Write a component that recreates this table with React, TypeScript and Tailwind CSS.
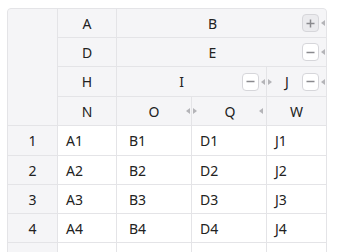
import React from "react";

const LeftTri = () => (
  <span className="w-0 h-0 border-y-[3.5px] border-y-transparent border-r-[4px] border-r-[#b4b4b8]" />
);
const RightTri = () => (
  <span className="w-0 h-0 border-y-[3.5px] border-y-transparent border-l-[4px] border-l-[#b4b4b8]" />
);

const Btn = ({ plus }: { plus?: boolean }) => (
  <span
    className={
      "w-[17px] h-[18px] rounded-[4px] border flex items-center justify-center shrink-0 " +
      (plus ? "bg-[#ebebee] border-[#d6d6da]" : "bg-white border-[#d6d6da]")
    }
  >
    <svg width="9" height="9" viewBox="0 0 9 9">
      <path d="M0.5 4.5H8.5" stroke="#8a8a8e" strokeWidth="1.5" />
      {plus && <path d="M4.5 0.5V8.5" stroke="#8a8a8e" strokeWidth="1.5" />}
    </svg>
  </span>
);

const H = "bg-[#f5f5f7] flex items-center text-[14px] text-[#222]";
const B = "bg-white flex items-center text-[14px] text-[#222]";

export default function App() {
  const rows = [1, 2, 3, 4, 5];
  return (
    <div className="w-[357px] h-[252px] overflow-hidden bg-white pl-[7px] pt-[8px]" style={{ fontFamily: '"Noto Sans", "Open Sans", sans-serif' }}>
      <div className="w-[320px] border border-[#e4e4e7] rounded-t-[4px] overflow-hidden bg-[#e4e4e7] grid grid-cols-[49px_58px_74px_74px_59px] grid-rows-[28px_28px_29px_28px_29px_28px_28px_28px_28px] gap-px">
        <div className={H + " row-span-4"} />
        <div className={H + " justify-center"}>A</div>
        <div className={H + " col-span-3"}>
          <span className="flex-1 text-center pl-[6px]">B</span>
          <Btn plus />
          <span className="w-[7px] flex justify-end pr-[1px]"><LeftTri /></span>
        </div>
        <div className={H + " justify-center"}>D</div>
        <div className={H + " col-span-3"}>
          <span className="flex-1 text-center pl-[6px]">E</span>
          <Btn />
          <span className="w-[7px] flex justify-end pr-[1px]"><LeftTri /></span>
        </div>
        <div className={H + " justify-center"}>H</div>
        <div className={H + " col-span-2"}>
          <span className="flex-1 text-center pl-[4px]">I</span>
          <Btn />
          <span className="w-[7px] flex justify-end pr-[1px]"><LeftTri /></span>
        </div>
        <div className={H}>
          <span className="w-[5px] flex pl-[1px]"><RightTri /></span>
          <span className="flex-1 text-center">J</span>
          <Btn />
          <span className="w-[7px] flex justify-end pr-[1px]"><LeftTri /></span>
        </div>
        <div className={H + " justify-center"}>N</div>
        <div className={H}>
          <span className="flex-1 text-center pl-[7px]">O</span>
          <span className="w-[7px] flex justify-end pr-[1px]"><LeftTri /></span>
        </div>
        <div className={H}>
          <span className="w-[5px] flex pl-[1px]"><RightTri /></span>
          <span className="flex-1 text-center pl-[4px]">Q</span>
          <span className="w-[7px] flex justify-end pr-[3px]"><LeftTri /></span>
        </div>
        <div className={H + " justify-center"}>W</div>
        {rows.map((r) => (
          <React.Fragment key={r}>
            <div className={H + " justify-center"}>{r}</div>
            <div className={B + " pl-[8px]"}>A{r}</div>
            <div className={B + " pl-[12px]"}>B{r}</div>
            <div className={B + " pl-[8px]"}>D{r}</div>
            <div className={B + " pl-[8px]"}>J{r}</div>
          </React.Fragment>
        ))}
      </div>
    </div>
  );
}
